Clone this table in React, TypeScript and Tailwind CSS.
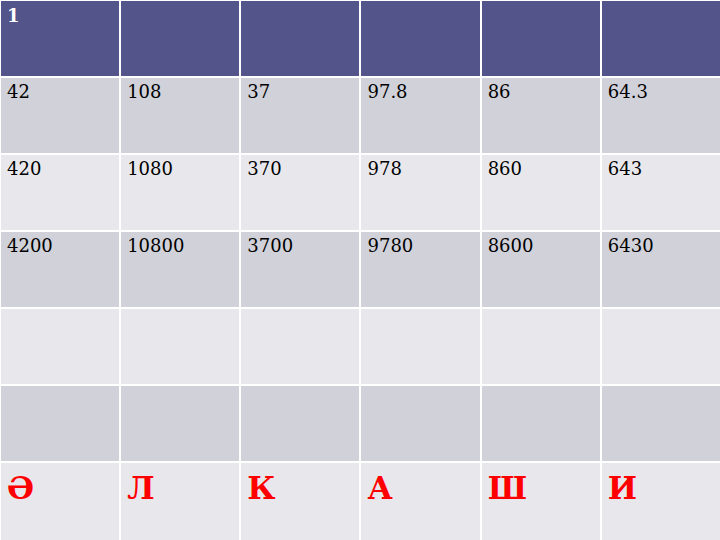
import React from "react";

const rows: string[][] = [
  ["42", "108", "37", "97.8", "86", "64.3"],
  ["420", "1080", "370", "978", "860", "643"],
  ["4200", "10800", "3700", "9780", "8600", "6430"],
  ["", "", "", "", "", ""],
  ["", "", "", "", "", ""],
];

const letters = ["Ә", "Л", "К", "А", "Ш", "И"];

export default function App() {
  return (
    <div
      className="w-[720px] h-[540px] bg-white pl-[1px] pt-[1px] overflow-hidden"
      style={{ fontFamily: '"DejaVu Serif", serif' }}
    >
      <div className="grid grid-cols-6 grid-rows-[repeat(6,75px)_1fr] gap-[2px] h-full">
        {[0, 1, 2, 3, 4, 5].map((i) => (
          <div key={"h" + i} className="bg-[#53548a] text-white font-bold text-[18px] leading-none pl-[6px] pt-[6px]">
            {i === 0 ? "1" : ""}
          </div>
        ))}
        {rows.map((r, ri) =>
          r.map((c, ci) => (
            <div
              key={ri + "-" + ci}
              className={
                (ri % 2 === 0 ? "bg-[#d0d1d9]" : "bg-[#e8e8ec]") +
                " text-black text-[18px] leading-none pl-[6px] pt-[5px]"
              }
            >
              {c}
            </div>
          ))
        )}
        {letters.map((l, i) => (
          <div key={"l" + i} className="bg-[#e8e8ec] text-[#ff0000] font-bold text-[31px] leading-none pl-[6px] pt-[10px]">
            {l}
          </div>
        ))}
      </div>
    </div>
  );
}
